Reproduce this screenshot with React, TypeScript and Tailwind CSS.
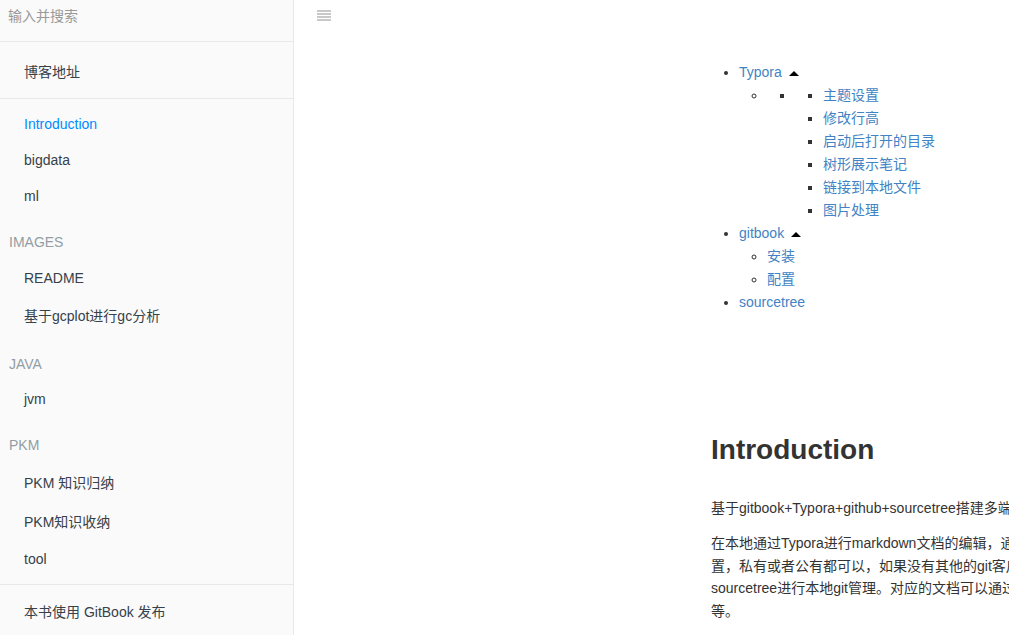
import React from "react"

const font = "font-['Liberation_Sans','Noto_Sans_CJK_SC',sans-serif]"

const Item = ({ children, h, active }: { children: React.ReactNode; h: string; active?: boolean }) => (
    <div className={`flex items-center pl-[24px] text-[14px] ${h} ${active ? "text-[#008cff]" : "text-[#364149]"}`}>
        {children}
    </div>
)

const Header = ({ children }: { children: React.ReactNode }) => (
    <div className="h-[46px] pl-[9px] pt-[20px] text-[14px] leading-[16px] uppercase text-[#939da3]">
        {children}
    </div>
)

const Divider = () => <div className="my-[7px] h-px bg-[#e8e8e8]" />

const Caret = () => (
    <svg width="10" height="5" viewBox="0 0 10 5" className="ml-[7px] inline-block align-[1px]">
        <polygon points="0,5 5,0 10,5" fill="#000" />
    </svg>
)

const A = ({ children }: { children: React.ReactNode }) => (
    <a className="text-[#4183c4]">{children}</a>
)

export default function App() {
    return (
        <div className={`flex h-[635px] w-[1009px] overflow-hidden bg-white ${font}`}>
            <div className="w-[294px] shrink-0 border-r border-[#e9e9e9] bg-[#fafafa]">
                <div className="h-[42px] border-b border-[#e8e8e8] pl-[8px] pt-[7px] text-[14px] leading-[18px] text-[#999]">
                    输入并搜索
                </div>
                <div className="pt-[11px]">
                    <Item h="h-[38px]">博客地址</Item>
                    <Divider />
                    <Item h="h-[36px]" active>Introduction</Item>
                    <Item h="h-[36px]">bigdata</Item>
                    <Item h="h-[36px]">ml</Item>
                    <Header>Images</Header>
                    <Item h="h-[36px]">README</Item>
                    <Item h="h-[40px]">基于gcplot进行gc分析</Item>
                    <Header>Java</Header>
                    <Item h="h-[35px]">jvm</Item>
                    <Header>PKM</Header>
                    <Item h="h-[40px]">PKM 知识归纳</Item>
                    <Item h="h-[38px]">PKM知识收纳</Item>
                    <Item h="h-[36px]">tool</Item>
                    <Divider />
                    <Item h="h-[40px]">本书使用 GitBook 发布</Item>
                </div>
            </div>

            <div className="flex min-w-0 flex-1 flex-col">
                <div className="h-[61px] shrink-0 pl-[23px] pt-[10px]">
                    <svg width="14" height="11" viewBox="0 0 14 11">
                        <rect x="0" y="0" width="14" height="2" fill="#c8c8c8" />
                        <rect x="0" y="3" width="14" height="2" fill="#c8c8c8" />
                        <rect x="0" y="6" width="14" height="2" fill="#c8c8c8" />
                        <rect x="0" y="9" width="14" height="2" fill="#c8c8c8" />
                    </svg>
                </div>
                <div className="w-[770px] shrink-0 pl-[417px] text-[14px] text-[#333]">
                    <ul className="list-disc pl-[28px] leading-[23px]">
                        <li>
                            <A>Typora</A>
                            <Caret />
                            <ul className="list-[circle] pl-[28px]">
                                <li>
                                    <ul className="list-[square] pl-[28px]">
                                        <li>
                                            <ul className="list-[square] pl-[28px]">
                                                <li><A>主题设置</A></li>
                                                <li><A>修改行高</A></li>
                                                <li><A>启动后打开的目录</A></li>
                                                <li><A>树形展示笔记</A></li>
                                                <li><A>链接到本地文件</A></li>
                                                <li><A>图片处理</A></li>
                                            </ul>
                                        </li>
                                    </ul>
                                </li>
                            </ul>
                        </li>
                        <li>
                            <A>gitbook</A>
                            <Caret />
                            <ul className="list-[circle] pl-[28px]">
                                <li><A>安装</A></li>
                                <li><A>配置</A></li>
                            </ul>
                        </li>
                        <li><A>sourcetree</A></li>
                    </ul>

                    <h1 className="mt-[119px] w-[600px] text-[28px] font-bold leading-[34px] text-[#333]">Introduction</h1>

                    <p className="mt-[30px] w-[600px] whitespace-nowrap leading-[22.4px]">
                        基于gitbook+Typora+github+sourcetree搭建多端同步的个人知识库
                    </p>
                    <p className="mt-[13px] w-[600px] whitespace-nowrap leading-[22.4px]">
                        在本地通过Typora进行markdown文档的编辑，通过gitbook生成静态页面，托管到github仓库，仓库的设
                        <br />
                        置，私有或者公有都可以，如果没有其他的git客户端工具，推荐使用
                        <br />
                        sourcetree进行本地git管理。对应的文档可以通过网页、手机端查看
                        <br />
                        等。
                    </p>
                </div>
            </div>
        </div>
    )
}
